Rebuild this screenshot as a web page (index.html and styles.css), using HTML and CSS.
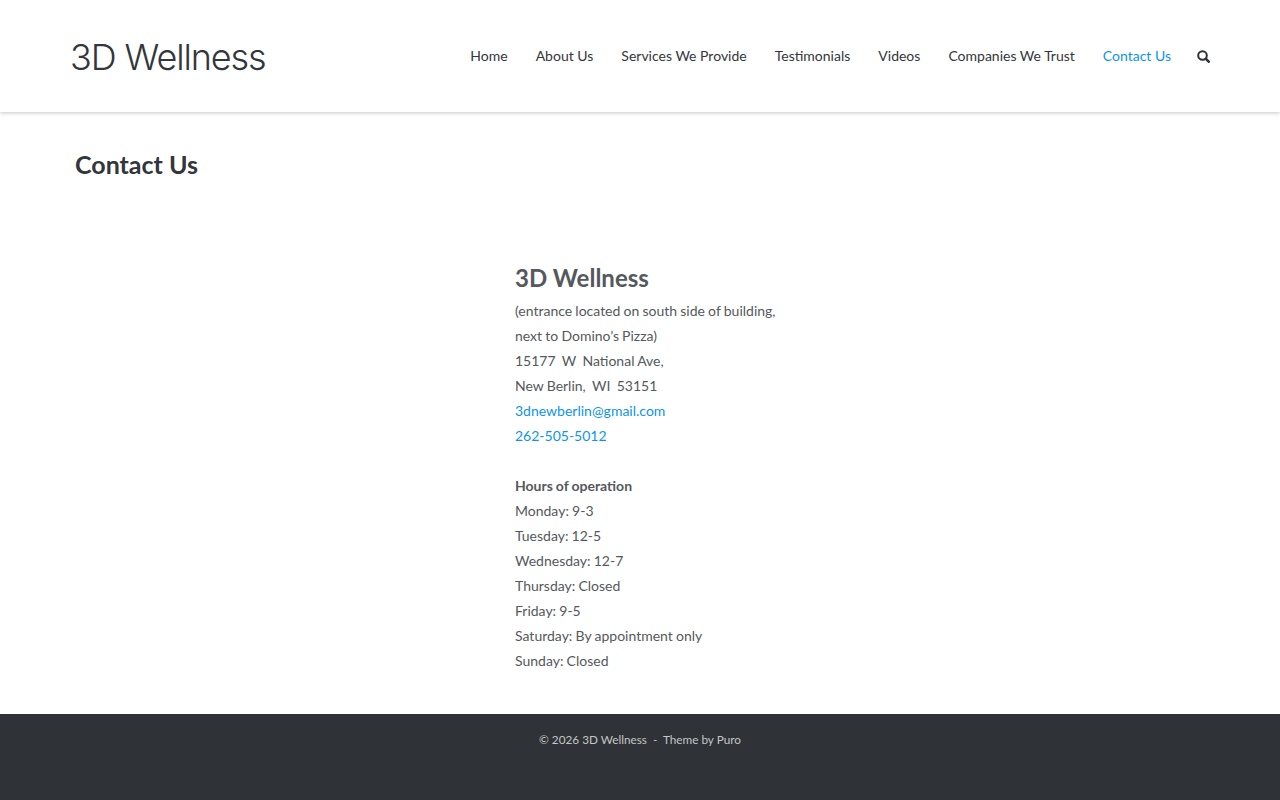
FILE: index.html
```html
<!DOCTYPE html>
<html lang="en">
<head>
<meta charset="utf-8">
<title>Contact Us - 3D Wellness</title>
<link rel="stylesheet" href="styles.css">
</head>
<body>
<header class="masthead">
  <a class="logo" href="#">3D Wellness</a>
  <nav class="nav">
    <a href="#">Home</a>
    <a href="#">About Us</a>
    <a href="#">Services We Provide</a>
    <a href="#">Testimonials</a>
    <a href="#">Videos</a>
    <a href="#">Companies We Trust</a>
    <a class="current" href="#">Contact Us</a>
    <a class="search" href="#" aria-label="Search">
      <svg width="13" height="13" viewBox="0 0 13 13"><circle cx="5.5" cy="5.5" r="4.3" fill="none" stroke="#2f3237" stroke-width="2"/><path d="M8.9 8.9l2.8 2.8" stroke="#2f3237" stroke-width="2.6" stroke-linecap="round"/></svg>
    </a>
  </nav>
</header>
<main class="main">
  <h1 class="page-title">Contact Us</h1>
  <section class="details">
    <h2>3D Wellness</h2>
    <p>(entrance located on south side of building,<br>
    next to Domino’s Pizza)<br>
    15177&nbsp; W&nbsp; National Ave,<br>
    New Berlin,&nbsp; WI&nbsp; 53151<br>
    <a href="#">3dnewberlin@gmail.com</a><br>
    <a href="#">262-505-5012</a></p>
    <p class="hours"><strong>Hours of operation</strong><br>
    Monday: 9-3<br>
    Tuesday: 12-5<br>
    Wednesday: 12-7<br>
    Thursday: Closed<br>
    Friday: 9-5<br>
    Saturday: By appointment only<br>
    Sunday: Closed</p>
  </section>
</main>
<footer class="footer">
  <p>© 2026 3D Wellness &nbsp;-&nbsp; Theme by <a href="#">Puro</a></p>
</footer>
</body>
</html>
```
FILE: styles.css
```css
* { box-sizing: border-box; }
html, body { margin: 0; height: 100%; }
body {
  font-family: Lato, "Liberation Sans", sans-serif;
  font-size: 14px;
  line-height: 25px;
  color: #55585c;
  background: #fff;
  display: flex;
  flex-direction: column;
  min-height: 800px;
}
a { text-decoration: none; color: inherit; }
.masthead {
  height: 112px;
  padding: 0 70px;
  display: flex;
  align-items: center;
  justify-content: space-between;
  box-shadow: 0 1px 4px rgba(0, 0, 0, .22);
}
.logo {
  font-family: Inter, Lato, sans-serif;
  font-weight: 300;
  font-size: 36px;
  letter-spacing: -1.1px;
  line-height: 40px;
  padding-top: 2px;
  color: #33363b;
}
.nav { display: flex; align-items: center; gap: 28px; font-size: 14px; color: #33363b; padding-bottom: 2px; }
.nav .current { color: #0d94e8; }
.search { display: flex; margin-left: -2px; padding-top: 2px; }
.main { flex: 1; padding: 0 75px; }
.page-title {
  margin: 35px 0 0;
  font-size: 25px;
  line-height: 34px;
  font-weight: 700;
  color: #33363b;
}
.details { margin: 79px 0 0 440px; }
.details h2 {
  margin: 0 0 3px;
  font-size: 24px;
  line-height: 35px;
  font-weight: 700;
  color: #55585c;
}
.details p { margin: 0; word-spacing: -0.4px; }
.details a { color: #0d94e8; }
.hours { padding-top: 25px; }
.footer {
  height: 86px;
  background: #2f3237;
  color: #c4c6c8;
  font-size: 11.75px;
  line-height: 20px;
  text-align: center;
  padding-top: 16px;
}
.footer p { margin: 0; }
```
